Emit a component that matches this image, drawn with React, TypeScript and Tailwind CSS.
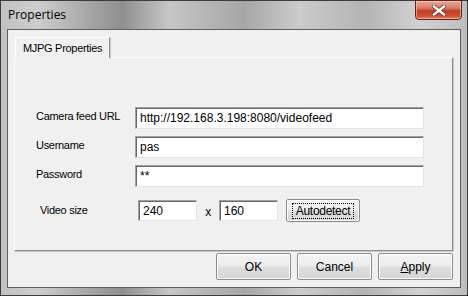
import React from 'react';

const font = "font-['Tahoma','Liberation_Sans',sans-serif]";

const Field: React.FC<{ value: string; className: string }> = ({ value, className }) => (
  <div
    className={`flex items-center bg-white border border-t-[#a0a0a0] border-l-[#a0a0a0] border-r-[#e3e3e3] border-b-[#e3e3e3] shadow-[inset_1px_1px_0_#696969] pl-[4px] text-[12px] tracking-normal text-black ${className}`}
  >
    {value}
  </div>
);

const Button: React.FC<{ children: React.ReactNode; className?: string }> = ({ children, className = '' }) => (
  <div
    className={`flex items-center justify-center border border-[#8c8c8c] rounded-[2px] bg-[linear-gradient(180deg,#f4f4f4_0%,#ececec_48%,#dedede_52%,#d6d6d6_100%)] shadow-[inset_0_0_0_1px_#fbfbfb] text-[11px] text-black ${className}`}
  >
    {children}
  </div>
);

export default function App() {
  return (
    <div
      className={`w-[468px] h-[296px] flex flex-col border border-[#3c3c3c] bg-[linear-gradient(90deg,#c2c2c2_0%,#cdcdcd_8%,#a2a2a2_20%,#8f8f8f_26%,#c6c6c6_36%,#a6a6a6_52%,#cbcbcb_64%,#b4b4b4_78%,#d1d1d1_90%,#bdbdbd_100%)] ${font}`}
    >
      {/* Title bar */}
      <div className="h-[28px] flex items-start justify-between">
        <span className="pl-[7px] pt-[5px] text-[12px] text-black font-['Segoe_UI','Open_Sans',sans-serif]">Properties</span>
        <div className="mr-[5px] -mt-px w-[47px] h-[20px] flex items-center justify-center rounded-b-[4px] border border-[#5e241a] bg-[linear-gradient(180deg,#e9a99b_0%,#d97a66_40%,#c13d25_55%,#cf5339_85%,#e58a6d_100%)] shadow-[inset_0_0_0_1px_rgba(255,220,210,0.5)]">
          <svg width="14" height="11" viewBox="0 0 14 11">
            <path d="M2 1.5 L12 9.5 M12 1.5 L2 9.5" stroke="#6a2a20" strokeWidth="4" strokeLinecap="square" />
            <path d="M2 1.5 L12 9.5 M12 1.5 L2 9.5" stroke="#ffffff" strokeWidth="2.4" strokeLinecap="square" />
          </svg>
        </div>
      </div>

      {/* Client area */}
      <div className="mx-[6px] mb-[7px] flex-1 flex flex-col border border-[#5f5f5f] bg-[#f0f0f0] pt-[7px] pl-[6px] pr-[7px]">
        {/* Tab strip */}
        <div className="flex">
          <div className="ml-px h-[21px] px-[7px] flex items-center border border-b-0 border-l-white border-t-white border-r-[#8e8e8e] shadow-[1px_0_0_#c8c8c8] bg-[#f0f0f0] text-[11px] tracking-[-0.3px] text-black relative z-10 -mb-px">
            MJPG Properties
          </div>
        </div>

        {/* Tab panel */}
        <div className="h-[194px] flex flex-col border border-l-white border-t-white border-r-[#8e8e8e] border-b-[#8e8e8e] shadow-[1px_1px_0_#c8c8c8] pt-[49px] pl-[21px] text-[11px] tracking-[-0.3px] text-black">
          <div className="flex items-center h-[22px]">
            <span className="w-[99px] -mt-[3px]">Camera feed URL</span>
            <Field value="http://192.168.3.198:8080/videofeed" className="w-[289px] h-[22px]" />
          </div>
          <div className="flex items-center h-[22px] mt-[7px]">
            <span className="w-[99px] -mt-[3px]">Username</span>
            <Field value="pas" className="w-[289px] h-[22px]" />
          </div>
          <div className="flex items-center h-[22px] mt-[7px]">
            <span className="w-[99px] -mt-[3px]">Password</span>
            <Field value="**" className="w-[289px] h-[22px]" />
          </div>
          <div className="flex items-center h-[23px] mt-[12px]">
            <span className="w-[102px] pl-[4px]">Video size</span>
            <Field value="240" className="w-[59px] h-[21px]" />
            <span className="w-[22px] text-center text-[12px] pt-[3px]">x</span>
            <Field value="160" className="w-[59px] h-[21px]" />
            <Button className="ml-[8px] w-[74px] h-[23px] border-[#5a5a5a]">
              <span className="px-[3px] text-[12px] leading-[14px] border border-dotted border-black">Autodetect</span>
            </Button>
          </div>
        </div>

        {/* Dialog buttons */}
        <div className="flex justify-end gap-[6px] mt-[2px]">
          <Button className="w-[75px] h-[27px] text-[12px]">OK</Button>
          <Button className="w-[75px] h-[27px] text-[12px]">Cancel</Button>
          <Button className="w-[75px] h-[27px] text-[12px]">
            <span><span className="underline">A</span>pply</span>
          </Button>
        </div>
      </div>
    </div>
  );
}
